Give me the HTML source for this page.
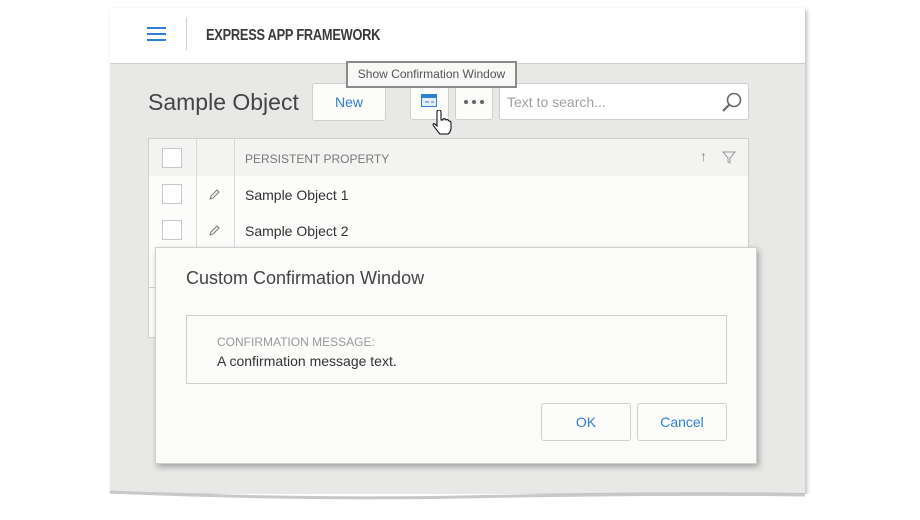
<!DOCTYPE html>
<html><head><style>
*{box-sizing:border-box;margin:0;padding:0}
body{width:920px;height:520px;background:#fff;position:relative;overflow:hidden;font-family:"Liberation Sans",sans-serif}
.abs{position:absolute}
.win{left:110px;top:8px;width:695px;height:490px;background:#e8e9e7;box-shadow:2px 2px 4px rgba(0,0,0,.25)}
.hdr{left:110px;top:8px;width:695px;height:56px;background:#fff;border-bottom:1px solid #cfd0ce}
.btn{background:#fcfcfb;border:1px solid #cfd0ce;border-radius:3px}
.cb{width:20px;height:20px;border:1px solid #c8c8c8;background:#fff}
</style></head><body>
<div class="abs win"></div>
<svg class="abs" style="left:100px;top:480px" width="720" height="40"><path d="M10 0 L10 12 Q200 18 360 16 Q560 12 705 14 L705 0 Z" fill="#e8e9e7"/><path d="M10 12 Q200 18 360 16 Q560 12 705 14" stroke="#bbb" stroke-width="2" fill="none"/><rect x="0" y="14" width="720" height="30" fill="#fff"/><path d="M10 12 Q200 20 360 17 Q560 13 705 15" stroke="#c8c8c8" stroke-width="3" fill="none"/></svg>
<div class="abs hdr"></div>
<div class="abs" style="left:147px;top:27px;width:19px;height:2px;background:#2f7fd0;box-shadow:0 6px 0 #2f7fd0,0 12px 0 #2f7fd0"></div>
<div class="abs" style="left:186px;top:17px;width:1px;height:33px;background:#d0d0d0"></div>
<div class="abs" style="left:206px;top:27px;font-size:16px;font-weight:bold;color:#3a3a3a;letter-spacing:-0.3px;transform:scaleX(0.8);transform-origin:0 0;white-space:nowrap">EXPRESS APP FRAMEWORK</div>
<div class="abs" style="left:148px;top:89px;font-size:23px;color:#444">Sample Object</div>
<div class="abs btn" style="left:312px;top:83px;width:74px;height:38px;color:#2f7fd0;font-size:14px;text-align:center;line-height:36px">New</div>
<div class="abs btn" style="left:410px;top:83px;width:39px;height:37px"></div>
<svg class="abs" style="left:421px;top:94px" width="17" height="14"><rect x=".5" y=".5" width="15" height="12" fill="#e6eef8" stroke="#2f7fd0"/><rect x="1" y="1" width="14" height="3" fill="#2f7fd0"/><path d="M4 8h4M10 8h3" stroke="#2f7fd0"/></svg>
<div class="abs btn" style="left:455px;top:83px;width:38px;height:37px"></div>
<svg class="abs" style="left:463px;top:99px" width="22" height="6"><circle cx="3" cy="3" r="2" fill="#666"/><circle cx="11" cy="3" r="2" fill="#666"/><circle cx="19" cy="3" r="2" fill="#666"/></svg>
<div class="abs btn" style="left:499px;top:83px;width:250px;height:37px;background:#fff"></div>
<div class="abs" style="left:507px;top:94px;font-size:14px;color:#a0a0a0">Text to search...</div>
<svg class="abs" style="left:721px;top:91px" width="22" height="22"><circle cx="13" cy="9" r="6.5" stroke="#666" stroke-width="1.6" fill="none"/><path d="M8.5 13.5 L2 20" stroke="#666" stroke-width="2.2"/></svg>
<svg class="abs" style="left:432px;top:110px" width="22" height="26"><path d="M5 2 Q5 0 7 0 Q9 0 9 2 L9 10 L11 10 L11 9 Q13 8 14 10 Q16 9 17 11 Q19 11 19 13 L19 19 Q18 23 16 24 L8 24 Q6 22 4 19 L1 15 Q1 13 3 14 L5 16 Z" fill="#fff" stroke="#000" stroke-width="1"/></svg>
<div class="abs" style="left:346px;top:61px;width:171px;height:27px;background:#f8f8f7;border:2px solid #8a8a8a;font-size:12px;color:#555;line-height:23px;text-align:center">Show Confirmation Window</div>
<div class="abs" style="left:148px;top:138px;width:601px;height:200px;background:#fcfcfb;border:1px solid #cfd0ce"></div>
<div class="abs" style="left:149px;top:139px;width:599px;height:37px;background:#f3f4f2"></div>
<div class="abs" style="left:196px;top:139px;width:1px;height:110px;background:#d8d8d8"></div>
<div class="abs" style="left:234px;top:139px;width:1px;height:110px;background:#d8d8d8"></div>
<div class="abs" style="left:149px;top:287px;width:8px;height:1px;background:#d0d0d0"></div>
<div class="abs cb" style="left:162px;top:148px"></div>
<div class="abs cb" style="left:162px;top:184px"></div>
<div class="abs cb" style="left:162px;top:220px"></div>
<div class="abs" style="left:245px;top:152px;font-size:12px;color:#777">PERSISTENT PROPERTY</div>
<div class="abs" style="left:700px;top:148px;font-size:14px;color:#888">↑</div>
<svg class="abs" style="left:722px;top:151px" width="14" height="13"><path d="M1 1H13L8 7V12L6 11V7Z" fill="none" stroke="#999"/></svg>
<div class="abs" style="left:245px;top:187px;font-size:14px;color:#333">Sample Object 1</div>
<div class="abs" style="left:245px;top:223px;font-size:14px;color:#333">Sample Object 2</div>
<svg class="abs" style="left:208px;top:189px" width="12" height="12"><path d="M2 10 L3 7 L9 1 L11 3 L5 9 Z" fill="none" stroke="#777"/></svg>
<svg class="abs" style="left:208px;top:225px" width="12" height="12"><path d="M2 10 L3 7 L9 1 L11 3 L5 9 Z" fill="none" stroke="#777"/></svg>
<div class="abs" style="left:155px;top:247px;width:602px;height:217px;background:#fbfbfa;border:1px solid #cfd0ce;box-shadow:2px 3px 6px rgba(0,0,0,.3)"></div>
<div class="abs" style="left:186px;top:268px;font-size:18px;color:#444">Custom Confirmation Window</div>
<div class="abs" style="left:186px;top:315px;width:541px;height:69px;border:1px solid #cfd0ce"></div>
<div class="abs" style="left:217px;top:335px;font-size:12px;color:#999">CONFIRMATION MESSAGE:</div>
<div class="abs" style="left:217px;top:353px;font-size:14px;color:#333">A confirmation message text.</div>
<div class="abs btn" style="left:541px;top:403px;width:90px;height:38px;color:#2f7fd0;font-size:14px;text-align:center;line-height:36px">OK</div>
<div class="abs btn" style="left:637px;top:403px;width:90px;height:38px;color:#2f7fd0;font-size:14px;text-align:center;line-height:36px">Cancel</div>
</body></html>
